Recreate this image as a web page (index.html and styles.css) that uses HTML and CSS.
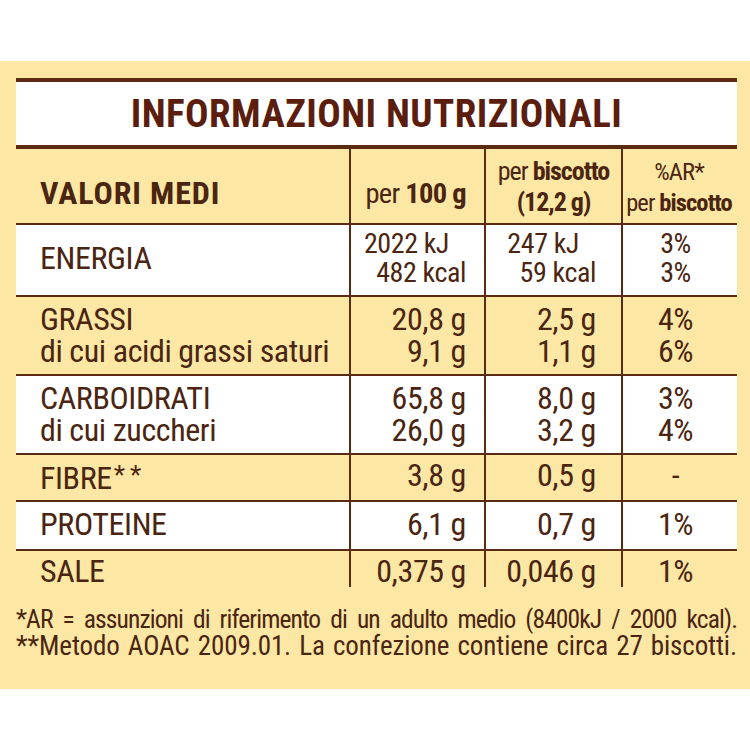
FILE: index.html
```html
<!DOCTYPE html>
<html lang="it">
<head>
<meta charset="utf-8">
<title>Informazioni nutrizionali</title>
<link rel="stylesheet" href="styles.css">
</head>
<body>
<div class="panel">
  <table class="nt">
    <colgroup><col class="c1"><col class="c2"><col class="c3"><col class="c4"></colgroup>
    <thead>
      <tr class="title"><th colspan="4">INFORMAZIONI NUTRIZIONALI</th></tr>
      <tr class="head">
        <th class="lbl">VALORI MEDI</th>
        <th class="n v2">per <b>100 g</b></th>
        <th class="n v3">per <b>biscotto</b><br><b>(12,2 g)</b></th>
        <th class="n v4">%AR*<br>per <b>biscotto</b></th>
      </tr>
    </thead>
    <tbody>
      <tr class="r energy w">
        <td class="lbl">ENERGIA</td>
        <td class="n v2"><span class="kj">2022 kJ</span><span class="kc">482 kcal</span></td>
        <td class="n v3"><span class="kj">247 kJ</span><span class="kc">59 kcal</span></td>
        <td class="n v4">3%<br>3%</td>
      </tr>
      <tr class="r two">
        <td class="lbl">GRASSI<br>di cui acidi grassi saturi</td>
        <td class="n v2">20,8 g<br>9,1 g</td>
        <td class="n v3">2,5 g<br>1,1 g</td>
        <td class="n v4">4%<br>6%</td>
      </tr>
      <tr class="r two w">
        <td class="lbl">CARBOIDRATI<br>di cui zuccheri</td>
        <td class="n v2">65,8 g<br>26,0 g</td>
        <td class="n v3">8,0 g<br>3,2 g</td>
        <td class="n v4">3%<br>4%</td>
      </tr>
      <tr class="r fibre">
        <td class="lbl">FIBRE<span class="st">**</span></td>
        <td class="n v2">3,8 g</td>
        <td class="n v3">0,5 g</td>
        <td class="n v4">-</td>
      </tr>
      <tr class="r prot w">
        <td class="lbl">PROTEINE</td>
        <td class="n v2">6,1 g</td>
        <td class="n v3">0,7 g</td>
        <td class="n v4">1%</td>
      </tr>
      <tr class="r sale last">
        <td class="lbl">SALE</td>
        <td class="n v2">0,375 g</td>
        <td class="n v3">0,046 g</td>
        <td class="n v4">1%</td>
      </tr>
    </tbody>
  </table>
  <div class="notes">
    <p class="note n1">*AR = assunzioni di riferimento di un adulto medio (8400kJ / 2000 kcal).</p>
    <p class="note n2">**Metodo AOAC 2009.01. La confezione contiene circa 27 biscotti.</p>
  </div>
</div>
</body>
</html>
```
FILE: styles.css
```css
* { box-sizing: border-box; }
html, body { margin: 0; padding: 0; background: #ffffff; }
body {
  font-family: "Roboto Condensed", Roboto, sans-serif;
  font-stretch: 75%;
  color: #4a2511;
}
.panel {
  margin-top: 61px;
  height: 628px;
  background: #fde7a4;
  padding: 17px 13px 0 16px;
}
.nt {
  width: 721px;
  border-collapse: separate;
  border-spacing: 0;
  table-layout: fixed;
}
.c1 { width: 333px; }
.c2 { width: 135px; }
.c3 { width: 137px; }
.c4 { width: 116px; }
.nt th, .nt td {
  padding: 0;
  font-weight: normal;
  vertical-align: top;
  font-size: 32px;
  line-height: 32px;
  letter-spacing: -0.4px;
  white-space: nowrap;
}
.nt b { font-weight: bold; }
.nt .title { height: 71px; }
.nt .title th {
  background: #ffffff;
  border-top: 4px solid #5a2a12;
  border-bottom: 4px solid #5a2a12;
  text-align: center;
  vertical-align: middle;
  font-weight: bold;
  font-size: 39px;
  line-height: 40px;
  letter-spacing: 0.45px;
  color: #5b1d0d;
}
.nt .n { border-left: 2px solid #5a2a12; }
.nt .head { height: 76px; }
.nt .head th { border-bottom: 2px solid #5a2a12; vertical-align: bottom; }
.nt .head .lbl { font-weight: bold; font-size: 32px; letter-spacing: 0.9px; padding: 0 0 14px 24px; text-align: left; }
.nt .head .v2 { text-align: right; font-size: 28.5px; letter-spacing: -0.7px; padding: 0 18px 13px 0; }
.nt .head .v3 { text-align: center; font-size: 26px; line-height: 31px; letter-spacing: -1px; padding: 0 0 5px 0; }
.nt .head .v4 { text-align: center; font-size: 24.5px; line-height: 31px; letter-spacing: -0.9px; padding: 0 2px 5px 0; }
.nt .r td { border-bottom: 2px solid #5a2a12; }
.nt .r.last td { border-bottom: 0; }
.nt .w td { background: #ffffff; }
.nt .lbl { padding-left: 24px; }
.nt .v2 { text-align: right; padding-right: 18px; }
.nt .v3 { text-align: right; padding-right: 25px; }
.nt .v4 { text-align: center; padding-right: 9px; }
.kj, .kc { display: block; }
.kj { padding-right: 17px; }
.nt .energy { height: 72px; }
.nt .energy td { padding-top: 4px; font-size: 28px; line-height: 29px; }
.nt .energy td.lbl { padding-top: 17px; font-size: 32px; line-height: 32px; }
.nt .two { height: 79px; }
.nt .two td { padding-top: 6px; }
.nt .fibre { height: 47px; }
.nt .fibre td { padding-top: 4px; }
.st { letter-spacing: 5px; margin-left: 2px; font-size: 26px; vertical-align: 5px; }
.nt .prot { height: 49px; }
.nt .prot td { padding-top: 6px; }
.nt .sale { height: 36px; }
.nt .sale td { padding-top: 4px; }
.notes { margin-top: 19px; width: 721px; }
.note {
  margin: 0;
  font-size: 27px;
  line-height: 27px;
  white-space: nowrap;
  text-align: justify;
  text-align-last: justify;
}
.n1 { font-size: 25.5px; letter-spacing: -0.9px; }
.n2 { letter-spacing: -0.1px; }
```
